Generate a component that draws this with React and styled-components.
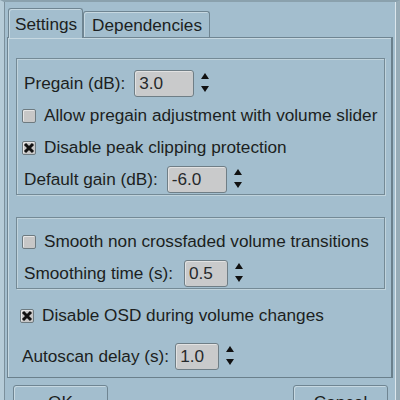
import React from 'react'
import styled, { createGlobalStyle } from 'styled-components'

const GlobalStyle = createGlobalStyle`
  html, body {
    margin: 0;
    padding: 0;
    background: #a3bece;
  }
  body {
    font-family: "Liberation Sans", Arial, sans-serif;
    font-size: 17.2px;
    color: #1c1f21;
  }
`

const Window = styled.div`
  width: 400px;
  height: 400px;
  box-sizing: border-box;
  overflow: hidden;
  background: #a3bece;
  border-top: 2px solid #8aa1ad;
  border-left: 4px solid #b6ccd8;
  border-right: 4px solid #97acb7;
  display: flex;
`

const Frame = styled.div`
  flex: 1;
  display: flex;
  flex-direction: column;
  border-left: 1px solid #7b909c;
  border-right: 1px solid #dbe6ec;
  padding: 6px 2px 0 2px;
`

const TabBar = styled.div`
  display: flex;
  align-items: flex-end;
  padding-left: 1px;
`

const Tab = styled.div`
  position: relative;
  z-index: 1;
  box-sizing: border-box;
  line-height: 20px;
  border: 1px solid #6f8592;
  border-bottom: none;
  border-radius: 3px 3px 0 0;
  box-shadow: inset 1px 1px 0 #c6d8e1;
  background: #a3bece;
  padding: ${p => (p.$active ? '5px 5px 4px 6px' : '3px 7px 2px 8px')};
  margin-bottom: ${p => (p.$active ? '-1px' : '0')};
`

const Panel = styled.div`
  border-top: 1px solid #6f8592;
  border-left: 1px solid #6f8592;
  border-right: 2px solid #6a808c;
  border-bottom: 1px solid #6a808c;
  box-shadow: inset 1px 1px 0 #c6d8e1;
  padding: 20px 6px 7px 8px;
  display: flex;
  flex-direction: column;
`

const Group = styled.div`
  border: 1px solid #748a96;
  box-shadow: inset 1px 1px 0 #c0d3dc, 1px 1px 0 #c0d3dc;
  padding: ${p => p.$pad};
  margin-bottom: 22px;
  display: flex;
  flex-direction: column;
  gap: 5px;
`

const Loose = styled.div`
  margin-top: -9px;
  padding-left: 5px;
  display: flex;
  flex-direction: column;
  gap: 14px;
`

const Row = styled.div`
  height: 27px;
  display: flex;
  align-items: center;
`

const Label = styled.span`
  padding-left: 1px;
  margin-right: ${p => p.$gap ?? 9}px;
  white-space: nowrap;
`

const Input = styled.div`
  box-sizing: border-box;
  width: ${p => p.$w}px;
  height: 27px;
  line-height: 25px;
  padding-left: 4px;
  color: #26292b;
  background: #c9cacb;
  border: 1px solid #6f7e86;
  border-radius: 3px;
  box-shadow: inset 1px 1px 0 #e2e2e2;
`

const Spin = styled.svg`
  margin-left: 7px;
  margin-top: -1px;
`

const Box = styled.span`
  box-sizing: border-box;
  width: 14px;
  height: 14px;
  margin-left: -1px;
  margin-right: 8px;
  background: #c7c7c7;
  border: 1px solid #6d7a80;
  border-radius: 2px;
  box-shadow: inset 1px 1px 0 #e6e6e6;
  display: flex;
  align-items: center;
  justify-content: center;
`

const Buttons = styled.div`
  display: flex;
  justify-content: space-between;
  padding: 7px 5px 0 6px;
`

const Button = styled.div`
  box-sizing: border-box;
  width: 95px;
  height: 30px;
  padding-top: 6px;
  line-height: 20px;
  text-align: center;
  border: 1px solid #6f8592;
  border-radius: 3px;
  box-shadow: inset 1px 1px 0 #c6d8e1;
`

function Spinner() {
  return (
    <Spin width="8" height="20" viewBox="0 0 8 20">
      <polygon points="4,0 8,6 0,6" fill="#111" />
      <polygon points="0,13 8,13 4,19" fill="#111" />
    </Spin>
  )
}

function Check({ checked, children }) {
  return (
    <Row>
      <Box>
        {checked && (
          <svg width="12" height="12" viewBox="0 0 12 12">
            <path d="M2 2 L10 10 M10 2 L2 10" stroke="#111" strokeWidth="3" />
          </svg>
        )}
      </Box>
      <span>{children}</span>
    </Row>
  )
}

function Field({ label, value, w, gap }) {
  return (
    <Row>
      <Label $gap={gap}>{label}</Label>
      <Input $w={w}>{value}</Input>
      <Spinner />
    </Row>
  )
}

export default function App() {
  return (
    <>
      <GlobalStyle />
      <Window>
        <Frame>
          <TabBar>
            <Tab $active>Settings</Tab>
            <Tab>Dependencies</Tab>
          </TabBar>
          <Panel>
            <Group $pad="11px 0 1px 6px">
              <Field label="Pregain (dB):" value="3.0" w={60} />
              <Check>Allow pregain adjustment with volume slider</Check>
              <Check checked>Disable peak clipping protection</Check>
              <Field label="Default gain (dB):" value="-6.0" w={60} />
            </Group>
            <Group $pad="10px 0 1px 6px">
              <Check>Smooth non crossfaded volume transitions</Check>
              <Field label="Smoothing time (s):" value="0.5" w={44} gap={11} />
            </Group>
            <Loose>
              <Check checked>Disable OSD during volume changes</Check>
              <Field label="Autoscan delay (s):" value="1.0" w={44} gap={6} />
            </Loose>
          </Panel>
          <Buttons>
            <Button>OK</Button>
            <Button>Cancel</Button>
          </Buttons>
        </Frame>
      </Window>
    </>
  )
}
